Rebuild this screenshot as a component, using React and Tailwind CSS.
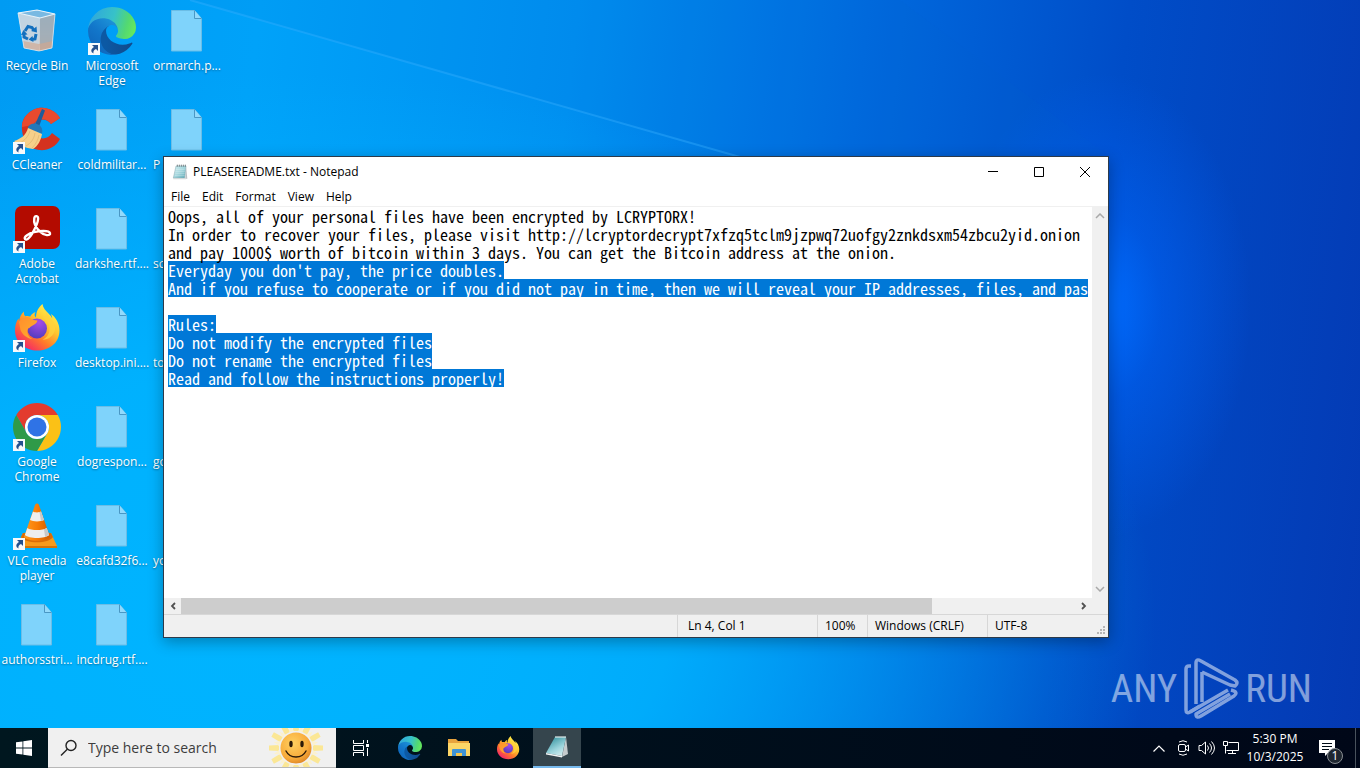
import { useEffect, useRef } from "react";

const NOTE = `Oops, all of your personal files have been encrypted by LCRYPTORX!
In order to recover your files, please visit http://lcryptordecrypt7xfzq5tclm9jzpwq72uofgy2znkdsxm54zbcu2yid.onion
and pay 1000$ worth of bitcoin within 3 days. You can get the Bitcoin address at the onion.
Everyday you don't pay, the price doubles.
And if you refuse to cooperate or if you did not pay in time, then we will reveal your IP addresses, files, and passwords.

Rules:
Do not modify the encrypted files
Do not rename the encrypted files
Read and follow the instructions properly!`;

const SELECTION_START = NOTE.indexOf("Everyday");
const LINE_HEIGHT = 18;

// one blue band per selected line, only as wide as its characters
const bands = NOTE.split("\n")
  .map((line, row) => ({ line, row }))
  .filter(({ line }) => line && NOTE.indexOf(line) >= SELECTION_START);

const selectionStyle = {
  backgroundImage: bands.map(() => "linear-gradient(#0078d7, #0078d7)").join(", "),
  backgroundSize: bands.map(({ line }) => `${line.length}ch ${LINE_HEIGHT}px`).join(", "),
  backgroundPosition: bands.map(({ row }) => `0 ${row * LINE_HEIGHT}px`).join(", "),
  backgroundRepeat: "no-repeat",
};

function RecycleBinIcon() {
  return (
    <svg viewBox="0 0 48 48" className="size-12">
      <defs>
        <linearGradient id="bin" x1="0" y1="0" x2="0" y2="1">
          <stop offset="0" stopColor="#9fc9e4" />
          <stop offset="0.6" stopColor="#c3cdd6" />
          <stop offset="1" stopColor="#dcc0ae" />
        </linearGradient>
      </defs>
      <path d="M5 6 24 3l18 4-3 34-12 3-16-3z" fill="url(#bin)" />
      <path d="M5 6l22 5-1 33-15-3z" fill="#c6d6e2" opacity="0.8" />
      <path d="M27 11l15-4-3 34-12 3z" fill="#98a4ae" opacity="0.75" />
      <path d="M10 34l16 3v7l-15-3zM26 37l14-3-1 7-12 3z" fill="#d3a88f" opacity="0.65" />
      <path d="M5 6 24 3l18 4-15 4z" fill="#79b9e2" stroke="#e8f3fa" strokeWidth="1.2" />
      <path d="M5 6l6 35 15 3 13-3 3-34" fill="none" stroke="#e5eef5" strokeWidth="0.7" />
      <g fill="none" stroke="#1370be" strokeWidth="3">
        <path d="M12 24l3-4.500 4 1 2 3" />
        <path d="M23 27l-1 5-4 .5" />
        <path d="M15 32l-4-2 0-3" />
      </g>
      <path d="M18 24l6 1.500-.5-6zM19.500 29l-4 3.500 5 2.500zM8 28l2.500-5 4 4.500z" fill="#1370be" />
    </svg>
  );
}

function EdgeIcon({ id, className }) {
  return (
    <svg viewBox="0 0 256 256" className={className}>
      <defs>
        <linearGradient id={`${id}a`} x1="0.2" y1="0.7" x2="1" y2="0.7">
          <stop offset="0" stopColor="#0c59a4" />
          <stop offset="1" stopColor="#114a8b" />
        </linearGradient>
        <linearGradient id={`${id}b`} x1="0.8" y1="0.2" x2="0.3" y2="0.9">
          <stop offset="0" stopColor="#1b8fd6" />
          <stop offset="0.5" stopColor="#1276ca" />
          <stop offset="1" stopColor="#0f68bd" />
        </linearGradient>
        <linearGradient id={`${id}c`} x1="0" y1="0.4" x2="1" y2="0.6">
          <stop offset="0" stopColor="#2fa6dd" />
          <stop offset="0.5" stopColor="#37c2c8" />
          <stop offset="0.8" stopColor="#52d873" />
          <stop offset="1" stopColor="#66e95c" />
        </linearGradient>
      </defs>
      <path fill={`url(#${id}a)`} d="M231 190.500c-3.400 1.800-6.900 3.400-10.500 4.700a101.500 101.500 0 0 1-35.900 6.400c-47.300 0-88.500-32.500-88.500-74.300a31.500 31.500 0 0 1 16.400-27.300c-42.800 1.800-53.800 46.400-53.800 72.500 0 74 68.100 81.400 82.800 81.400 7.900 0 19.800-2.300 27-4.600l1.300-.4a128.300 128.300 0 0 0 66.600-52.800 4 4 0 0 0-5.400-5.600Z" />
      <path fill={`url(#${id}b)`} d="M105.700 241.400a79.200 79.200 0 0 1-22.700-21.300 80.700 80.700 0 0 1 29.500-120c3.200-1.500 8.500-4.100 15.600-4a32.400 32.400 0 0 1 25.700 13 31.900 31.900 0 0 1 6.300 18.700c0-.2 24.500-79.600-80-79.600-43.900 0-80 41.600-80 78.200a130.200 130.200 0 0 0 12.100 56 128 128 0 0 0 156.400 67 75.500 75.500 0 0 1-62.800-8Z" />
      <path fill={`url(#${id}c)`} d="M152.300 148.900c-.9 1-3.400 2.500-3.400 5.600 0 2.600 1.700 5.200 4.800 7.300 14.300 10 41.400 8.600 41.500 8.600a59.600 59.600 0 0 0 30.300-8.300 61.400 61.400 0 0 0 30.400-52.900c.3-22.400-8-37.300-11.300-43.900C223.500 23.900 177.700 0 128 0A128 128 0 0 0 0 126.200c.5-36.500 36.800-66 80-66 3.500 0 23.500.3 42 10a72.600 72.600 0 0 1 30.900 29.300c6.100 10.600 7.200 24.100 7.200 29.500s-2.700 13.300-7.800 19.900Z" />
    </svg>
  );
}

function FirefoxIcon({ id, className }) {
  return (
    <svg viewBox="0 0 48 48" className={className}>
      <defs>
        <linearGradient id={`${id}a`} x1="0.85" y1="0.1" x2="0.2" y2="0.95">
          <stop offset="0" stopColor="#fff14f" />
          <stop offset="0.35" stopColor="#ffc52e" />
          <stop offset="0.65" stopColor="#ff7a2a" />
          <stop offset="1" stopColor="#f5236b" />
        </linearGradient>
        <radialGradient id={`${id}b`} cx="0.6" cy="0.2" r="0.9">
          <stop offset="0" stopColor="#a74be8" />
          <stop offset="1" stopColor="#4a3bbb" />
        </radialGradient>
        <linearGradient id={`${id}c`} x1="0" y1="0" x2="1" y2="1">
          <stop offset="0" stopColor="#ff8f2c" />
          <stop offset="1" stopColor="#ffae2c" />
        </linearGradient>
      </defs>
      <path
        fill={`url(#${id}a)`}
        d="M29.500 0c.5 4 3 6.500 6.500 10 1.500 1.500 2.600 3 3.300 4.500-.2-1.800-.8-3.200-1.400-4.500 4.800 3 8.600 9.300 8.600 16.500C46.500 38.600 36.500 46.500 24.500 46.500S2 38.500 2 26.500c0-4.500 1-9 3.500-12 .1 1 .3 1.800.7 2.600.4-4.100 1.800-7 4.800-9.600-.3 2 .1 3.500 1.200 4.700 1.700-.5 3.400-.4 5 .2 1.500-2.400 3-3.500 5.300-4.400-1.300 2-1.300 3.900.5 5.500 0-5.700 2.500-10.300 6.500-13.500z"
      />
      <circle cx="24" cy="24.500" r="10" fill={`url(#${id}b)`} />
      <path
        fill={`url(#${id}c)`}
        d="M6 18c1.500-2.300 4-4.500 7-5 1.800-.3 3.300.2 4.500 1.200 2.200 1.900 4.300 1.700 7 2.300-.5 2.300-2 3.600-4.400 4.700-2.800 1.200-2.900 2.600-5 3.300-1.800 4.500.3 8.400 4.400 10.600-6-.5-10-4.500-12-9z"
      />
      <path fill="#ffd23d" opacity="0.8" d="M30 14c4 2 7 6 6.500 12-.3 4.500-3 8-7 9.700 5.500.3 11-3.500 12.500-9.700C43 20 37 13 32.500 8c1 3-.5 4.700-2.500 6z" />
    </svg>
  );
}

function CCleanerIcon() {
  return (
    <svg viewBox="0 0 48 48" className="size-12">
      <path d="M47 12C41 3 30-.5 21 3.500 12 8 8 15 9 24c1 12 8 19 17 20 8 1 17-3 21-11l-8-6c-3 5-9 7-14 4-5-4-6-11-2-15s12-3 15 2z" fill="#d4321f" />
      <path d="M47 12C41 3 30-.5 21 3.500 14 7 9 13 9 21l11-2c3-7 14-8 18-1z" fill="#e84a2e" />
      <path d="M29 3l3 1.500-6 16-4-2z" fill="#1d5c9a" />
      <path d="M15 21c3-4 7-4 10-2.500 3 1.500 5 4 4 9l-14-5z" fill="#2478b8" />
      <path d="M15 22l14 6c-1 6-4 12-9 15-7-1-14-3-19-8 7-2 12-6 14-13z" fill="#f6d08a" />
      <path d="M17 25c-2 6-5 9-10 12M22 27c-1 6-4 10-9 13M26 29c-1 5-3 9-7 13" stroke="#e2b872" strokeWidth="0.8" fill="none" />
    </svg>
  );
}

function AcrobatIcon() {
  return (
    <svg viewBox="0 0 48 48" className="size-12">
      <rect x="2" y="1" width="45" height="43" rx="7" fill="#b30b00" />
      <path
        d="M12 34c-1.500-2.500 4-5.500 9-6.800 5.500-1.400 15-2 16 1 .8 3-6 2.500-10-1.500-4-4-6.500-9.500-5.700-13.500.6-3 4-2.700 3.800.8-.2 4-3.600 10.500-6.100 14.800-2.300 3.800-5.500 7.300-7 5.200z"
        fill="none"
        stroke="#fff"
        strokeWidth="2.400"
        strokeLinejoin="round"
      />
    </svg>
  );
}

function ChromeIcon() {
  const arm = "M24 12h20.780A24 24 0 0 0 3.220 12l10.390 18A12 12 0 0 1 24 12Z";
  return (
    <svg viewBox="0 0 48 48" className="size-12">
      <path d={arm} fill="#e33b2e" />
      <path d={arm} fill="#fbc116" transform="rotate(120 24 24)" />
      <path d={arm} fill="#2f9a48" transform="rotate(240 24 24)" />
      <circle cx="24" cy="24" r="12" fill="#fff" />
      <circle cx="24" cy="24" r="9.500" fill="#2f73e6" />
    </svg>
  );
}

function VlcIcon() {
  return (
    <svg viewBox="0 0 48 48" className="size-12">
      <defs>
        <linearGradient id="cone" x1="0" x2="1">
          <stop offset="0" stopColor="#ff9a1f" />
          <stop offset="0.5" stopColor="#f87d06" />
          <stop offset="1" stopColor="#cf5c00" />
        </linearGradient>
      </defs>
      <path d="M10 31h28l6 13c.5 1.500 0 2-1 2H5c-1 0-1.500-.5-1-2z" fill="#f79a1c" />
      <path d="M10 31h28l2 4c-4 7-28 7-32 0z" fill="#d96c08" />
      <path d="M4 44h40v2H4z" fill="#d57408" />
      <path d="M22 3c1-2 3-2 4 0l11 32c-4 5-22 5-26 0z" fill="url(#cone)" />
      <path d="M20 9.500c2 1.200 6 1.200 8 0l3 8.500c-3 1.900-11 1.900-14 0z" fill="#eee" />
      <path d="M14.300 26c4 2.700 15.400 2.700 19.400 0l2.400 7c-4 4-20.200 4-24.200 0z" fill="#eee" />
      <path d="M26.500 10l1.500-.5 3 8.500-3 1zM31 27.200l2.700-1.200 2.400 7-4 2z" fill="#c9c9c9" />
    </svg>
  );
}

function FileIcon() {
  return (
    <svg viewBox="0 0 48 48" className="size-12">
      <path d="M8.500 3.500h23l7 8v32.500h-30z" fill="#7fd3fb" stroke="#6bbde6" />
      <path d="M31.500 3.500v8h7" fill="#93dafc" stroke="#4a97c4" />
    </svg>
  );
}

function NotepadIcon({ id, className }) {
  return (
    <svg viewBox="0 0 24 24" className={className}>
      <defs>
        <linearGradient id={id} x1="0" y1="0" x2="1" y2="1">
          <stop offset="0" stopColor="#d4f0f3" />
          <stop offset="0.5" stopColor="#a3d6dd" />
          <stop offset="1" stopColor="#5ca9b6" />
        </linearGradient>
      </defs>
      <path d="M21 3l2 19h-3z" fill="#b9c0c3" />
      <path d="M6 3h15l-2 18H2z" fill={`url(#${id})`} stroke="#7fa3ab" strokeWidth="0.7" />
      <path d="M2 21h18l1 2H2z" fill="#d3d9da" />
      <path d="M8 1v3M11 1v3M14 1v3M17 1v3M20 1v3" stroke="#5b666b" strokeWidth="1.200" />
      <path d="M6 8h13M5 11h14M5 14h14M4 17h15" stroke="#fff" strokeWidth="0.6" opacity="0.7" />
    </svg>
  );
}

// the tilted notepad shown on the taskbar
function NotepadTaskIcon() {
  return (
    <svg viewBox="0 0 24 24" className="size-6">
      <defs>
        <linearGradient id="np-task" x1="0.2" y1="0" x2="0.8" y2="1">
          <stop offset="0" stopColor="#2f8f9c" />
          <stop offset="0.6" stopColor="#9bd4dc" />
          <stop offset="1" stopColor="#d8eef0" />
        </linearGradient>
      </defs>
      <path d="M21 2l2 17-6 3z" fill="#c6cbcd" />
      <path d="M10 2h11l-4 19L1 18z" fill="url(#np-task)" />
      <path d="M1 18l16 3 0 1.500L1 19.500z" fill="#f2f5f5" />
      <path d="M10 2h11" stroke="#dfe9ea" strokeWidth="1.200" />
    </svg>
  );
}

function ShortcutArrow() {
  return (
    <svg viewBox="0 0 12 12" className="absolute bottom-0 left-0 size-3">
      <path d="M0 0h12v12H0z" fill="#f7f9fb" />
      <path d="M4 2h6v6L8 6C6 7 5 8 5.500 10.500 2.500 9 2.500 6 6 4z" fill="#24508e" />
    </svg>
  );
}

const shortcuts = [
  { label: "Recycle Bin", icon: <RecycleBinIcon /> },
  { label: "CCleaner", icon: <CCleanerIcon />, shortcut: true },
  { label: "Adobe Acrobat", icon: <AcrobatIcon />, shortcut: true },
  { label: "Firefox", icon: <FirefoxIcon id="ff-desk" className="size-12" />, shortcut: true },
  { label: "Google Chrome", icon: <ChromeIcon />, shortcut: true },
  { label: "VLC media player", icon: <VlcIcon />, shortcut: true },
  { label: "authorsstri..." },
  { label: "Microsoft Edge", icon: <EdgeIcon id="edge-desk" className="size-12" />, shortcut: true },
  { label: "coldmilitar..." },
  { label: "darkshe.rtf...." },
  { label: "desktop.ini...." },
  { label: "dogrespon..." },
  { label: "e8cafd32f6..." },
  { label: "incdrug.rtf...." },
  { label: "ormarch.p..." },
  { label: "P", covered: true },
  { label: "sc", covered: true },
  { label: "to", covered: true },
  { label: "go", covered: true },
  { label: "yo", covered: true },
];

function DesktopIcon({ label, icon, shortcut, covered }) {
  return (
    <button className="flex h-[99px] flex-col items-center gap-[3px] pt-[7px] text-xs leading-[15px] text-white [text-shadow:0_1px_2px_rgba(0,0,0,0.4)]">
      <span className="relative">
        {icon || <FileIcon />}
        {shortcut && <ShortcutArrow />}
      </span>
      <span className={covered ? "w-full pl-[3px] text-left" : "w-full"}>{label}</span>
    </button>
  );
}

function Wallpaper() {
  return (
    <div className="absolute inset-0 bg-[linear-gradient(97deg,#009bf3_0%,#00a2f9_18%,#008ff0_40%,#006ade_60%,#004dc8_78%,#0439b3_100%)]">
      <div className="absolute inset-0 bg-[radial-gradient(ellipse_65%_75%_at_20%_85%,#00b4ff_0%,rgba(0,180,255,0.85)_45%,rgba(0,160,245,0)_100%)]" />
      <div className="absolute inset-0 bg-[radial-gradient(ellipse_11%_32%_at_81%_42%,#006cff_0%,rgba(0,100,250,0.5)_40%,rgba(0,80,220,0)_100%)]" />
      <svg viewBox="0 0 1360 728" preserveAspectRatio="none" className="absolute inset-0 size-full">
        <path d="M190 0 740 157H1110L900 0z" fill="#0060d0" opacity="0.08" />
        <path d="M190 0 740 157" stroke="#38b0ff" strokeWidth="2" opacity="0.4" />
      </svg>
    </div>
  );
}

function Notepad() {
  const text = useRef(null);

  useEffect(() => {
    text.current.focus();
    text.current.setSelectionRange(SELECTION_START, NOTE.length, "backward");
    text.current.scrollTo(0, 0);
  }, []);

  return (
    <section className="absolute left-[163px] top-[156px] flex h-[482px] w-[946px] flex-col border border-[#2c3a4a] bg-white text-xs text-black shadow-[0_4px_14px_rgba(0,0,0,0.3)]">
      <header className="flex h-[30px] shrink-0 items-center">
        <NotepadIcon id="np-title" className="ml-2 size-4" />
        <h1 className="ml-[5px] flex-1">PLEASEREADME.txt - Notepad</h1>
        <button aria-label="Minimize" className="flex h-full w-[46px] items-center justify-center">
          <svg viewBox="0 0 10 10" className="size-[10px]"><path d="M0 4.500h10" stroke="#000" /></svg>
        </button>
        <button aria-label="Maximize" className="flex h-full w-[46px] items-center justify-center">
          <svg viewBox="0 0 10 10" className="size-[10px]"><path d="M.5.500h9v9h-9z" fill="none" stroke="#000" /></svg>
        </button>
        <button aria-label="Close" className="flex h-full w-[46px] items-center justify-center">
          <svg viewBox="0 0 10 10" className="size-[10px]"><path d="M0 0l10 10M10 0 0 10" stroke="#000" /></svg>
        </button>
      </header>
      <nav className="flex h-5 shrink-0 items-center border-b border-[#f0f0f0] pl-px">
        {["File", "Edit", "Format", "View", "Help"].map((item) => (
          <button key={item} className="px-1.5">{item}</button>
        ))}
      </nav>
      <div className="flex min-h-0 flex-1">
        <div className="flex-1 px-1">
          <textarea
            ref={text}
            aria-label="Text editor"
            defaultValue={NOTE}
            wrap="off"
            spellCheck={false}
            style={selectionStyle}
            className="block h-full w-full resize-none overflow-hidden font-['Noto_Sans_Mono_CJK_SC','Liberation_Mono',monospace] text-base leading-[18px] outline-none selection:bg-transparent selection:text-white"
          />
        </div>
        <div className="flex w-4 flex-col items-center justify-between bg-[#f0f0f0] py-1.5">
          <svg viewBox="0 0 10 6" className="h-1.5 w-2.5"><path d="M1 5l4-4 4 4" fill="none" stroke="#a9a9a9" strokeWidth="1.500" /></svg>
          <svg viewBox="0 0 10 6" className="h-1.5 w-2.5"><path d="M1 1l4 4 4-4" fill="none" stroke="#a9a9a9" strokeWidth="1.500" /></svg>
        </div>
      </div>
      <div className="flex h-4 shrink-0 items-center bg-[#f0f0f0] pr-4">
        <span className="flex w-[17px] justify-center">
          <svg viewBox="0 0 6 8" className="h-2 w-1.5"><path d="M5 1 2 4l3 3" fill="none" stroke="#505050" strokeWidth="1.800" /></svg>
        </span>
        <div className="h-full flex-1">
          <div className="h-full w-[84%] bg-[#cdcdcd]" />
        </div>
        <span className="flex w-[17px] justify-center">
          <svg viewBox="0 0 6 8" className="h-2 w-1.5"><path d="M1 1l3 3-3 3" fill="none" stroke="#505050" strokeWidth="1.800" /></svg>
        </span>
      </div>
      <footer className="relative flex h-[23px] shrink-0 items-center border-t border-[#d7d7d7] bg-[#f0f0f0]">
        <p className="ml-auto w-[140px] border-l border-[#d7d7d7] pl-2.5 leading-[22px]">Ln 4, Col 1</p>
        <p className="w-[50px] border-l border-[#d7d7d7] pl-[7px] leading-[22px]">100%</p>
        <p className="w-[120px] border-l border-[#d7d7d7] pl-[7px] leading-[22px]">Windows (CRLF)</p>
        <p className="w-[121px] border-l border-[#d7d7d7] pl-[7px] leading-[22px]">UTF-8</p>
        <svg viewBox="0 0 9 9" className="absolute bottom-0.5 right-0.5 size-[9px]">
          <path d="M6 0h2v2H6zM3 3h2v2H3zM6 3h2v2H6zM0 6h2v2H0zM3 6h2v2H3zM6 6h2v2H6z" fill="#b5b5b5" />
        </svg>
      </footer>
    </section>
  );
}

function Watermark() {
  return (
    <div className="absolute bottom-2 right-12 flex items-center gap-1.5 font-['Roboto_Condensed','Open_Sans_Condensed','Roboto',sans-serif] text-[39px] leading-none text-white opacity-50">
      <span>ANY</span>
      <svg viewBox="0 0 56 62" className="h-[62px] w-14" fill="none" stroke="#fff" strokeWidth="3.500" strokeLinejoin="round">
        <path d="M8 8H6Q3 8 3 11V52Q3 56 7 54L17 48" />
        <path d="M13 46V5Q13 0 18 3L52 22Q56 25 52 28L47 27 19 14" />
        <path d="M19 14V44" />
        <path d="M7 54 45 32M48 32Q56 34 51 38L18 58Q13 61 13 56L47 36" />
      </svg>
      <span>RUN</span>
    </div>
  );
}

function SearchSun() {
  return (
    <svg viewBox="0 0 58 40" className="absolute right-[11px] top-0 h-10 w-[58px]">
      <defs>
        <radialGradient id="sun" cx="0.4" cy="0.35" r="0.7">
          <stop offset="0" stopColor="#ffd061" />
          <stop offset="0.7" stopColor="#f8ab3a" />
          <stop offset="1" stopColor="#dd8424" />
        </radialGradient>
      </defs>
      {[0, 30, 60, 90, 120, 150, 180, 210, 240, 270, 300, 330].map((angle) => (
        <path key={angle} d="M26 3l.5-10h5l.5 10z" fill="#fbe795" transform={`rotate(${angle} 29 20)`} />
      ))}
      {[15, 45, 75, 105, 135, 165, 195, 225, 255, 285, 315, 345].map((angle) => (
        <path key={angle} d="M26.500 3l2.500-6 2.500 6z" fill="#fbf1cf" transform={`rotate(${angle} 29 20)`} />
      ))}
      <circle cx="29" cy="20" r="15.500" fill="url(#sun)" />
      <ellipse cx="24" cy="16" rx="1.700" ry="3.300" fill="#2d1a08" />
      <ellipse cx="35" cy="16" rx="1.700" ry="3.300" fill="#2d1a08" />
      <path d="M19 23c4 8 16 8 20 0" fill="none" stroke="#2d1a08" strokeWidth="1.400" strokeLinecap="round" />
    </svg>
  );
}

function Taskbar() {
  return (
    <footer className="relative flex h-10 shrink-0 bg-linear-to-r from-[#00171f] to-[#000718] text-white">
      <button aria-label="Start" className="flex w-12 items-center justify-center">
        <svg viewBox="0 0 16 16" className="size-4">
          <path d="M0 2.300 6.500 1.400v6.200H0zM7.300 1.300 16 0v7.600H7.300zM0 8.400h6.500v6.200L0 13.700zM7.300 8.400H16V16l-8.700-1.300z" fill="#fff" />
        </svg>
      </button>
      <label className="relative flex w-72 items-center overflow-hidden border-b border-[#b8b8b8] bg-[#f0f0f0]">
        <svg viewBox="0 0 18 18" className="ml-3 size-[18px]" fill="none" stroke="#222" strokeWidth="1.400">
          <circle cx="11" cy="6.500" r="5" />
          <path d="M7.300 10.200 1 16.500" />
        </svg>
        <input
          type="text"
          aria-label="Search"
          placeholder="Type here to search"
          className="ml-2.5 w-[150px] text-sm text-black outline-none placeholder:text-[#3d3d3d]"
        />
        <SearchSun />
      </label>
      <nav className="flex gap-px">
        <button aria-label="Task view" className="flex w-[49px] items-center justify-center">
          <svg viewBox="0 0 16 16" className="size-4" fill="none" stroke="#fff">
            <path d="M.5 0v3.500h10V0M.5 16v-3.500h10V16M.5 5.500h10v5H.5zM14.500 0v3M14.500 8v8" />
            <path d="M13 4h3v3h-3z" fill="#fff" stroke="none" />
          </svg>
        </button>
        <button aria-label="Microsoft Edge" className="flex w-12 items-center justify-center">
          <EdgeIcon id="edge-task" className="size-6" />
        </button>
        <button aria-label="File Explorer" className="flex w-12 items-center justify-center">
          <svg viewBox="0 0 24 20" className="h-5 w-6">
            <path d="M1 1h8l2 2h11v15H1z" fill="#e8a33d" />
            <path d="M1 5h22v13H1z" fill="#fcd667" />
            <path d="M5 18v-6q0-1 1-1h12q1 0 1 1v6h-4v-3H9v3z" fill="#3f93d4" />
            <path d="M9 15h6v3H9z" fill="#f6c64c" />
          </svg>
        </button>
        <button aria-label="Firefox" className="flex w-12 items-center justify-center">
          <FirefoxIcon id="ff-task" className="size-6" />
        </button>
        <button aria-label="Notepad" className="flex w-12 items-center justify-center border-b-2 border-[#76b9ed] bg-[#35454d]">
          <NotepadTaskIcon />
        </button>
      </nav>
      <div className="ml-auto flex items-center">
        <button aria-label="Show hidden icons" className="flex w-6 justify-center">
          <svg viewBox="0 0 12 7" className="h-[7px] w-3" fill="none" stroke="#fff" strokeWidth="1.200"><path d="M.5 6.500 6 1l5.500 5.500" /></svg>
        </button>
        <button aria-label="Meet now" className="flex w-6 justify-center">
          <svg viewBox="0 0 16 16" className="size-4" fill="none" stroke="#fff">
            <rect x="3.500" y="4.500" width="7" height="7" rx="1.500" />
            <path d="M10.500 7l3-2v6l-3-2M4 2q4-2.500 8 0M4 14q4 2.500 8 0" />
          </svg>
        </button>
        <button aria-label="Volume" className="flex w-6 justify-center">
          <svg viewBox="0 0 18 16" className="h-4 w-[18px]" fill="none" stroke="#fff">
            <path d="M1 5.500h2.500L7.500 2v12L3.500 10.500H1zM9.500 5.500q2 2.500 0 5M11.500 3.500q4 4.500 0 9M13.500 1.500q6 6.500 0 13" />
          </svg>
        </button>
        <button aria-label="Network" className="flex w-6 justify-center">
          <svg viewBox="0 0 16 16" className="size-4" fill="none" stroke="#fff">
            <path d="M5.500 2.500h10v8h-12M.5 1.500h4v4h-4zM2.500 5.500v8M5 13.500h8M9.500 10.500v3" />
          </svg>
        </button>
        <p className="w-16 text-center text-xs leading-[18px]">
          5:30 PM
          <br />
          10/3/2025
        </p>
        <button aria-label="Notifications" className="relative flex h-10 w-12 items-center justify-center">
          <svg viewBox="0 0 16 16" className="mr-2 size-4">
            <path d="M0 0h16v13H9l-3 3v-3H0z" fill="#fff" />
            <path d="M3 3.500h10M3 6.500h10M3 9.500h7" stroke="#000b16" />
          </svg>
          <span className="absolute bottom-1 right-3 flex size-4 items-center justify-center rounded-full border border-[#8a8f94] bg-[#1f2730] text-xs">1</span>
        </button>
        <button aria-label="Show desktop" className="h-10 w-[5px] border-l border-[#49525c]" />
      </div>
    </footer>
  );
}

export default function App() {
  return (
    <div className="flex h-screen flex-col overflow-hidden font-['Open_Sans','Noto_Sans',sans-serif]">
      <main className="relative flex-1 overflow-hidden">
        <Wallpaper />
        <div className="relative grid w-fit auto-cols-[74px] grid-flow-col grid-rows-7 gap-x-px">
          {shortcuts.map((item) => (
            <DesktopIcon key={item.label} {...item} />
          ))}
        </div>
        <Notepad />
        <Watermark />
      </main>
      <Taskbar />
    </div>
  );
}
